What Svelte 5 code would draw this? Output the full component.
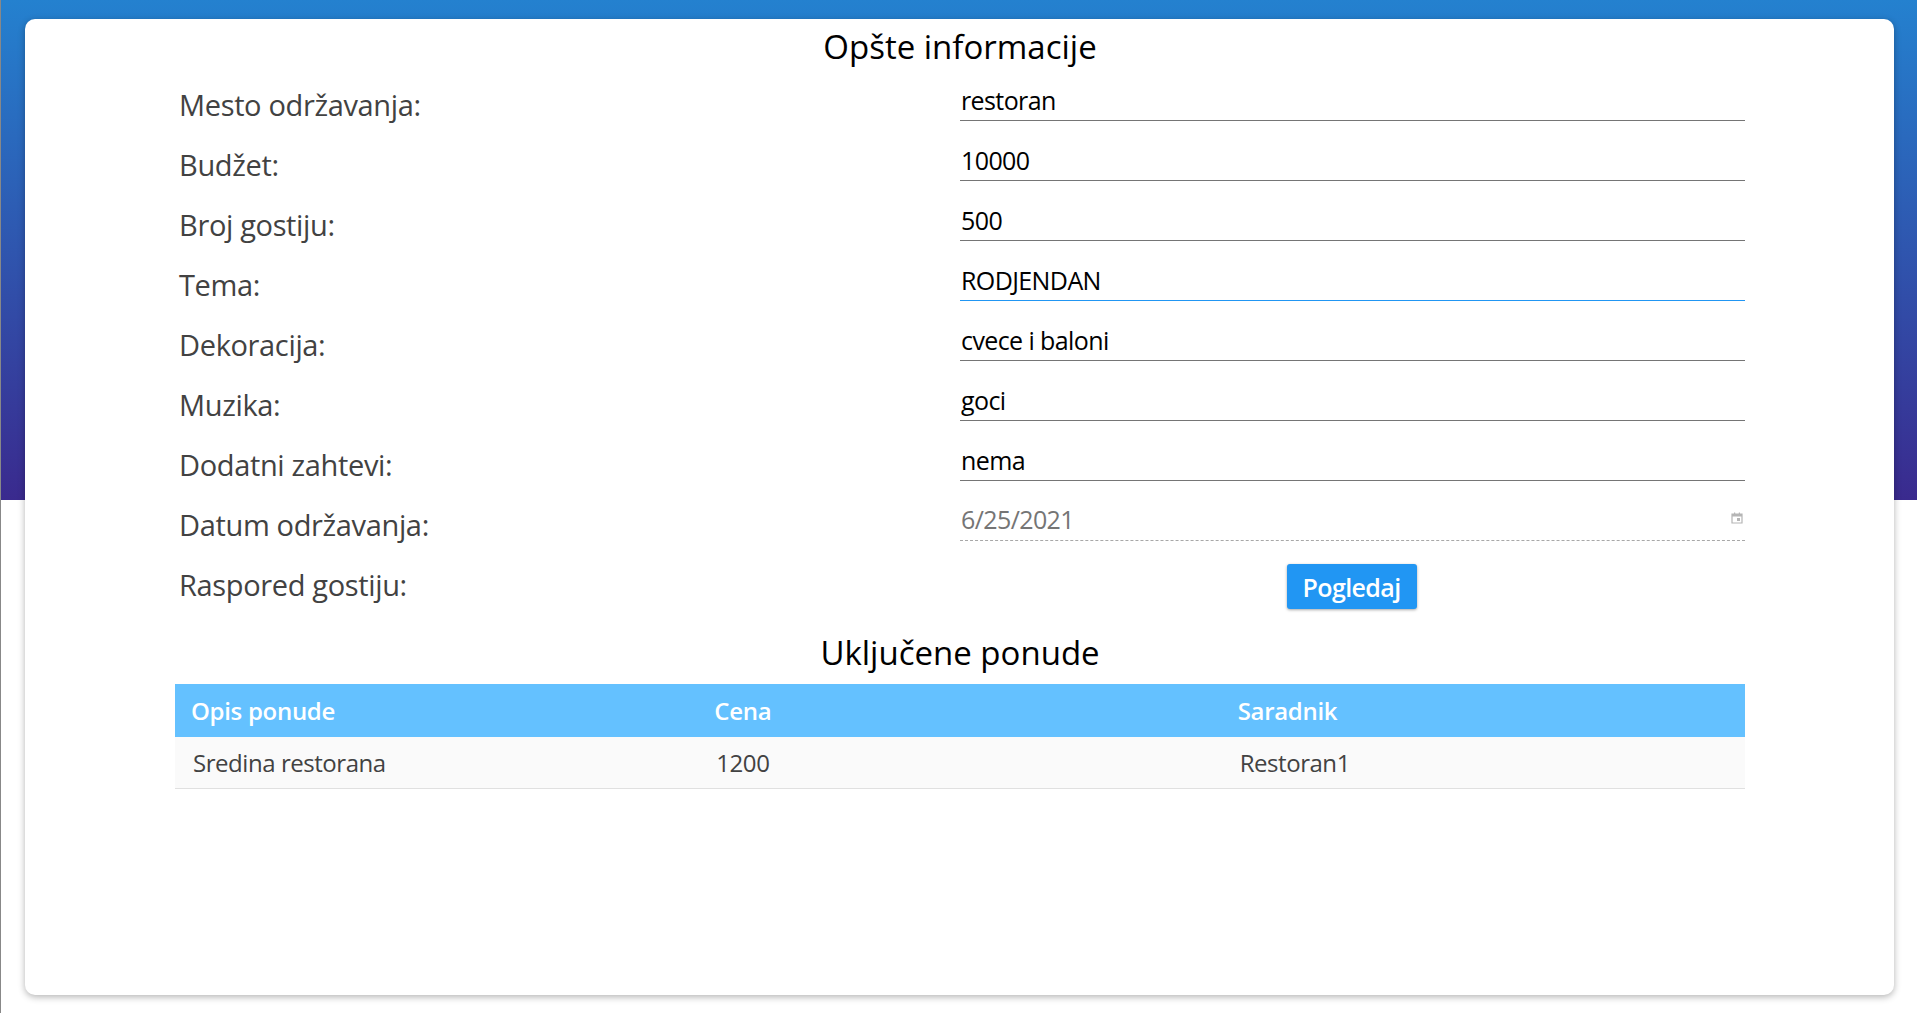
<script>
  let fields = [
    { label: 'Mesto održavanja:', value: 'restoran' },
    { label: 'Budžet:', value: '10000' },
    { label: 'Broj gostiju:', value: '500' },
    { label: 'Tema:', value: 'RODJENDAN', focused: true },
    { label: 'Dekoracija:', value: 'cvece i baloni' },
    { label: 'Muzika:', value: 'goci' },
    { label: 'Dodatni zahtevi:', value: 'nema' }
  ];

  let offers = [
    { opis: 'Sredina restorana', cena: 1200, saradnik: 'Restoran1' }
  ];
</script>

<div class="page">
  <div class="card">
    <h2>Opšte informacije</h2>
    <div class="form">
      {#each fields as field}
        <div class="row">
          <span class="label">{field.label}</span>
          <div class="control" class:focused={field.focused}>
            <input type="text" value={field.value} />
          </div>
        </div>
      {/each}
      <div class="row">
        <span class="label">Datum održavanja:</span>
        <div class="control disabled">
          <input type="text" value="6/25/2021" disabled />
          <svg width="12" height="12" viewBox="0 0 12 12">
            <path d="M1 2h10v9H1z" fill="none" stroke="#b5b5b5" stroke-width="1.2" />
            <path d="M1 2h10v2.4H1zM3 .6h1.2V2H3zM7.8 .6H9V2H7.8z" fill="#b5b5b5" />
            <rect x="6" y="6" width="3" height="3" fill="#b5b5b5" />
          </svg>
        </div>
      </div>
      <div class="row last">
        <span class="label">Raspored gostiju:</span>
        <div class="action">
          <button>Pogledaj</button>
        </div>
      </div>
    </div>

    <h2 class="second">Uključene ponude</h2>
    <table>
      <thead>
        <tr>
          <th>Opis ponude</th>
          <th>Cena</th>
          <th>Saradnik</th>
        </tr>
      </thead>
      <tbody>
        {#each offers as offer}
          <tr>
            <td>{offer.opis}</td>
            <td>{offer.cena}</td>
            <td>{offer.saradnik}</td>
          </tr>
        {/each}
      </tbody>
    </table>
  </div>
</div>

<style>
  :global(body) {
    margin: 0;
    background: #fff;
    font-family: "Open Sans", "Noto Sans", sans-serif;
  }

  .page {
    height: 1013px;
    box-sizing: border-box;
    padding: 19px 23px 18px 24px;
    background: linear-gradient(180deg, #2481cf 0%, #3a2a8e 100%) no-repeat;
    background-size: 100% 500px;
    border-left: 1px solid #888;
    overflow: hidden;
  }

  .card {
    height: 976px;
    box-sizing: border-box;
    background: #fff;
    border-radius: 10px;
    box-shadow: 0 2px 7px rgba(0, 0, 0, 0.3);
    padding: 0 149px 0 150px;
  }

  h2 {
    margin: 0;
    height: 56px;
    line-height: 56px;
    text-align: center;
    font-size: 33px;
    font-weight: 400;
    color: #000;
  }

  .form {
    display: flex;
    flex-direction: column;
  }

  .row {
    display: grid;
    grid-template-columns: 1fr 1fr;
    height: 60px;
  }

  .row.last {
    height: 68px;
  }

  .label {
    padding: 0 0 0 4px;
    font-size: 29px;
    line-height: 59px;
    color: #424242;
    letter-spacing: -0.35px;
  }

  .control {
    display: flex;
    align-items: center;
    height: 45px;
    border-bottom: 1px solid #757575;
  }

  .control.focused {
    border-bottom-color: #2196f3;
  }

  .control.disabled {
    border-bottom: 1px dashed #a8a8a8;
  }

  .control svg {
    margin-right: 2px;
  }

  input {
    flex: 1;
    min-width: 0;
    height: 100%;
    box-sizing: border-box;
    padding: 5px 1px 0;
    border: 0;
    outline: 0;
    background: transparent;
    font-family: inherit;
    font-size: 25px;
    color: #000;
    letter-spacing: -0.6px;
  }

  input:disabled {
    color: #757575;
    padding-top: 3px;
  }

  .action {
    display: flex;
    justify-content: center;
    padding: 9px 2px 0 0;
  }

  button {
    width: 130px;
    height: 45px;
    padding: 0;
    border: 0;
    border-radius: 3px;
    background: #2196f3;
    color: #fff;
    font-family: inherit;
    font-size: 25px;
    font-weight: 600;
    letter-spacing: -0.6px;
    box-shadow: 0 1px 3px rgba(0, 0, 0, 0.35);
  }

  .second {
    height: 61px;
    line-height: 60px;
  }

  table {
    width: 100%;
    table-layout: fixed;
    border-collapse: collapse;
  }

  th {
    height: 53px;
    padding: 0 16px;
    background: #64c1ff;
    color: #fff;
    text-align: left;
    font-size: 24px;
    font-weight: 600;
    letter-spacing: -0.3px;
  }

  td {
    height: 51px;
    box-sizing: border-box;
    padding: 0 18px;
    background: #fafafa;
    border-bottom: 1px solid #e0e0e0;
    font-size: 24px;
    color: #424242;
    letter-spacing: -0.45px;
  }
</style>
